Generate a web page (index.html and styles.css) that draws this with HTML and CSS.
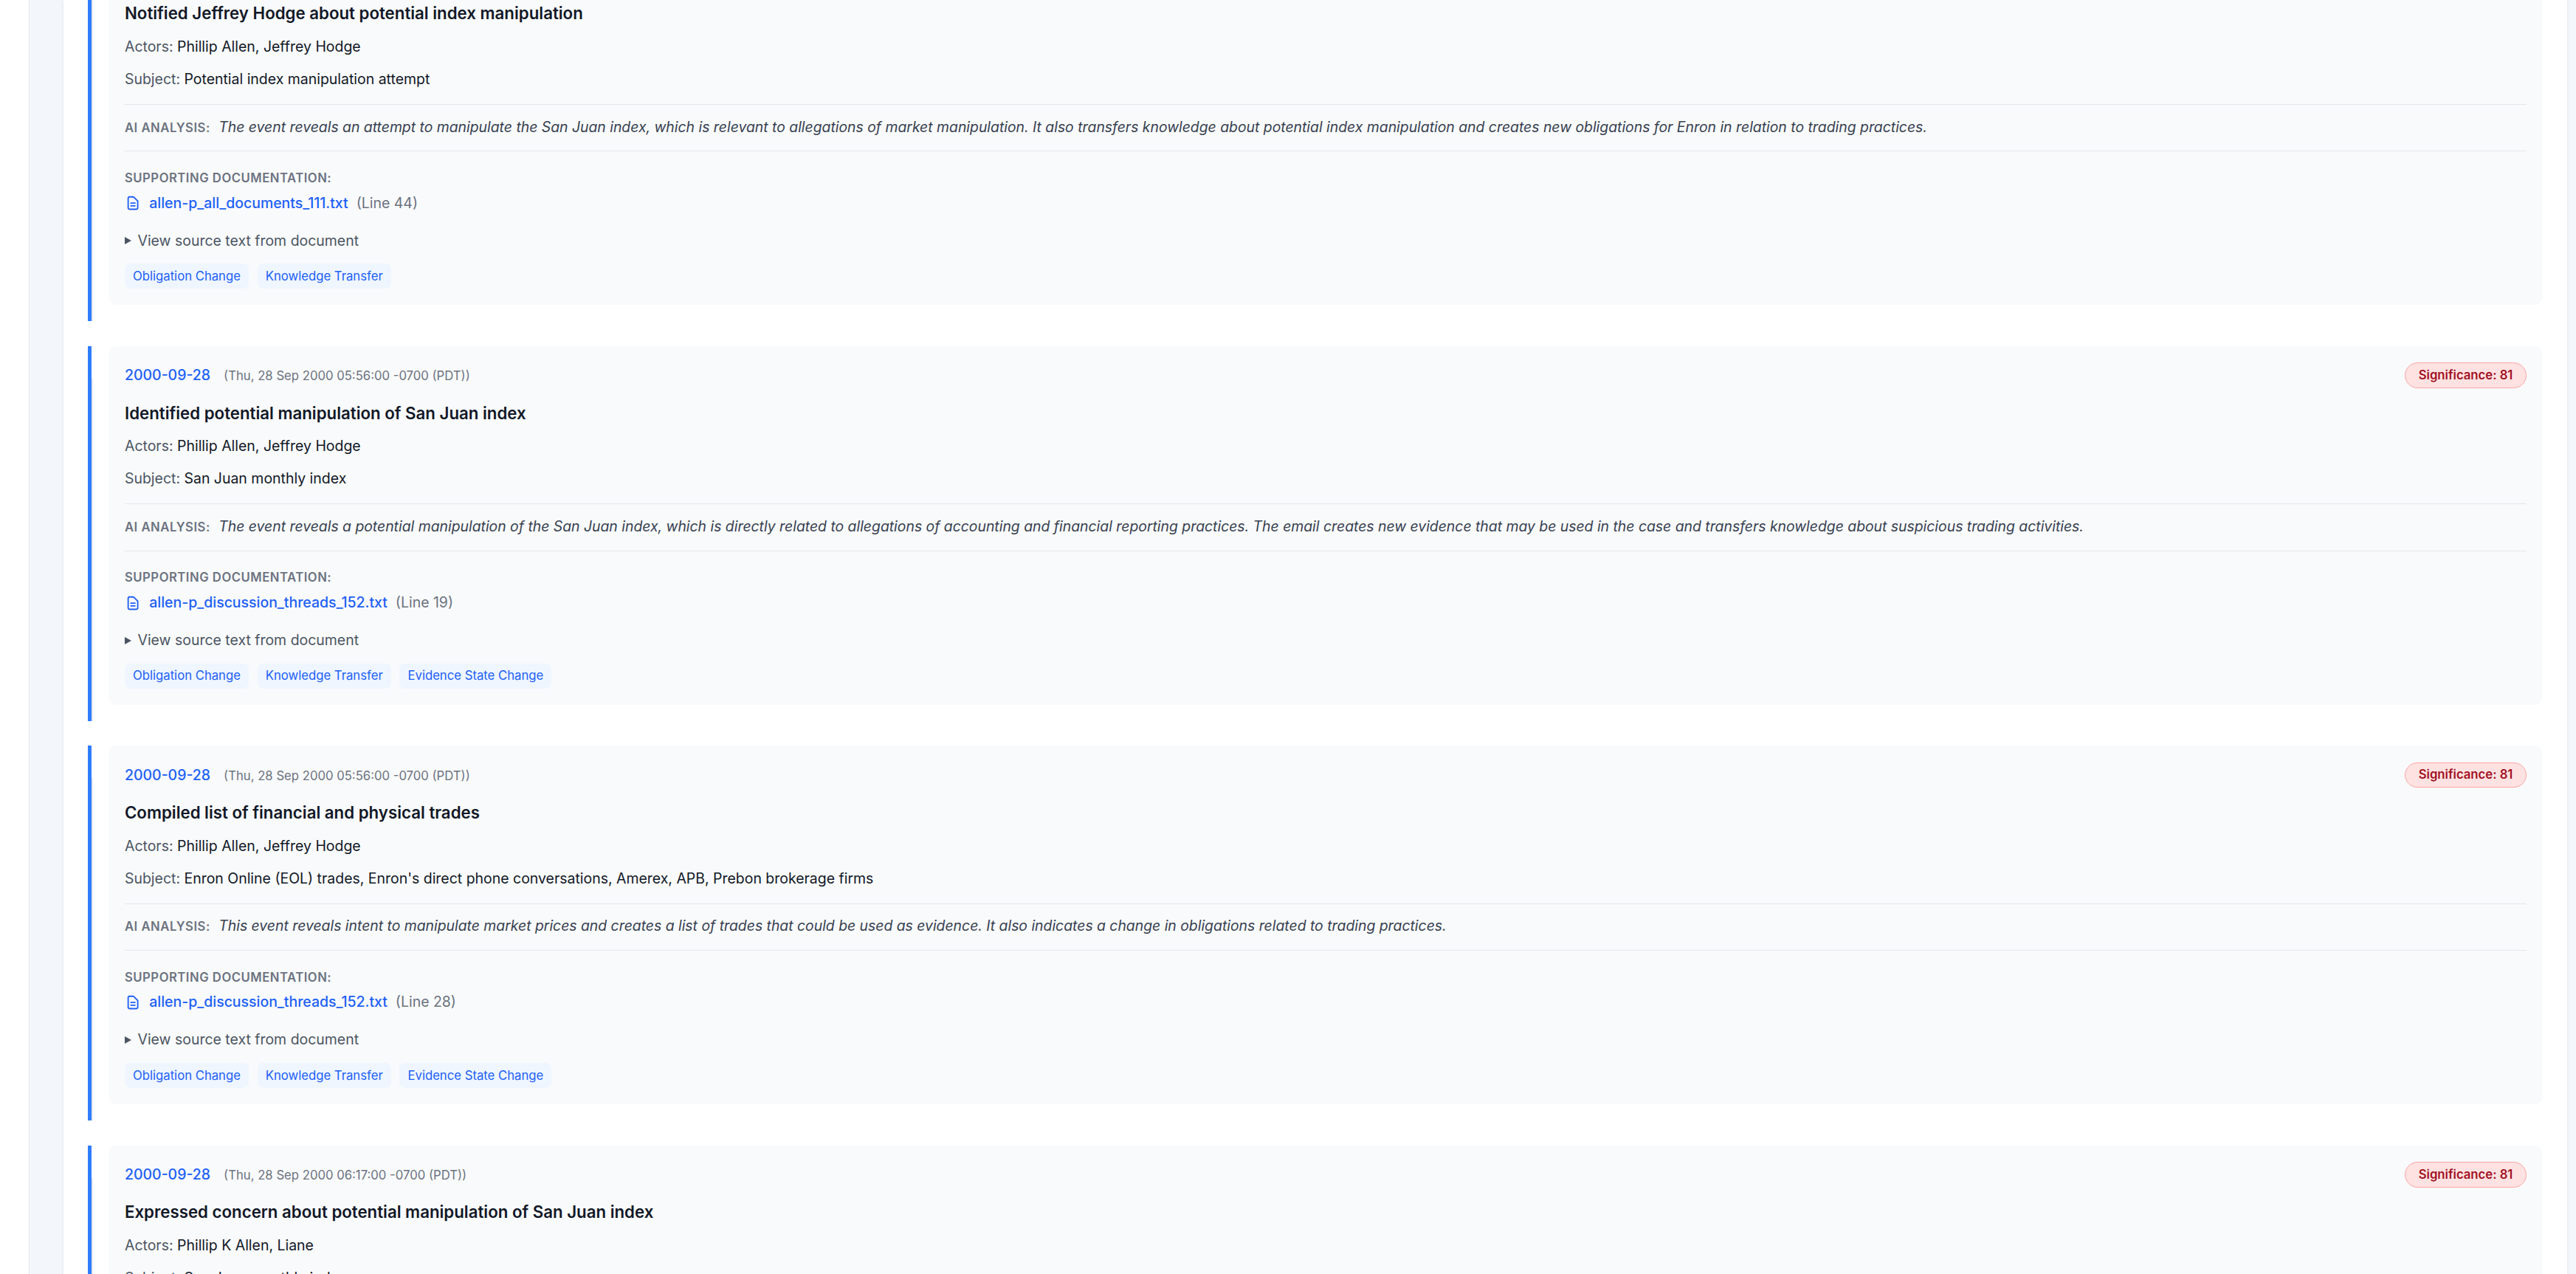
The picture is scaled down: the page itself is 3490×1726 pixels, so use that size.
FILE: index.html
```html
<!DOCTYPE html>
<html lang="en">
<head>
<meta charset="utf-8">
<title>Timeline</title>
<link rel="stylesheet" href="styles.css">
</head>
<body>
<div class="app">
  <aside class="rail"></aside>
  <main class="main">
    <section class="panel">
      <div class="timeline">

        <article class="item">
          <div class="card">
            <div class="head">
              <div class="when"><span class="date">2000-09-28</span><span class="stamp">(Thu, 28 Sep 2000 05:56:00 -0700 (PDT))</span></div>
              <span class="badge">Significance: 81</span>
            </div>
            <h3 class="title">Notified Jeffrey Hodge about potential index manipulation</h3>
            <p class="meta"><span class="label">Actors:</span> Phillip Allen, Jeffrey Hodge</p>
            <p class="meta"><span class="label">Subject:</span> Potential index manipulation attempt</p>
            <div class="analysis"><span class="analysis-label">AI ANALYSIS:</span><em>The event reveals an attempt to manipulate the San Juan index, which is relevant to allegations of market manipulation. It also transfers knowledge about potential index manipulation and creates new obligations for Enron in relation to trading practices.</em></div>
            <div class="docs-label">SUPPORTING DOCUMENTATION:</div>
            <div class="doc">
              <svg class="doc-icon" viewBox="0 0 24 24" fill="none" stroke="currentColor" stroke-width="2" stroke-linecap="round" stroke-linejoin="round"><path d="M9 12h6m-6 4h6m2 5H7a2 2 0 01-2-2V5a2 2 0 012-2h5.586a1 1 0 01.707.293l5.414 5.414a1 1 0 01.293.707V19a2 2 0 01-2 2z"/></svg>
              <a class="doc-link">allen-p_all_documents_111.txt</a><span class="doc-line">(Line 44)</span>
            </div>
            <div class="source"><span class="caret"></span>View source text from document</div>
            <div class="tags"><span class="tag">Obligation Change</span><span class="tag">Knowledge Transfer</span></div>
          </div>
        </article>

        <article class="item">
          <div class="card">
            <div class="head">
              <div class="when"><span class="date">2000-09-28</span><span class="stamp">(Thu, 28 Sep 2000 05:56:00 -0700 (PDT))</span></div>
              <span class="badge">Significance: 81</span>
            </div>
            <h3 class="title">Identified potential manipulation of San Juan index</h3>
            <p class="meta"><span class="label">Actors:</span> Phillip Allen, Jeffrey Hodge</p>
            <p class="meta"><span class="label">Subject:</span> San Juan monthly index</p>
            <div class="analysis"><span class="analysis-label">AI ANALYSIS:</span><em>The event reveals a potential manipulation of the San Juan index, which is directly related to allegations of accounting and financial reporting practices. The email creates new evidence that may be used in the case and transfers knowledge about suspicious trading activities.</em></div>
            <div class="docs-label">SUPPORTING DOCUMENTATION:</div>
            <div class="doc">
              <svg class="doc-icon" viewBox="0 0 24 24" fill="none" stroke="currentColor" stroke-width="2" stroke-linecap="round" stroke-linejoin="round"><path d="M9 12h6m-6 4h6m2 5H7a2 2 0 01-2-2V5a2 2 0 012-2h5.586a1 1 0 01.707.293l5.414 5.414a1 1 0 01.293.707V19a2 2 0 01-2 2z"/></svg>
              <a class="doc-link">allen-p_discussion_threads_152.txt</a><span class="doc-line">(Line 19)</span>
            </div>
            <div class="source"><span class="caret"></span>View source text from document</div>
            <div class="tags"><span class="tag">Obligation Change</span><span class="tag">Knowledge Transfer</span><span class="tag">Evidence State Change</span></div>
          </div>
        </article>

        <article class="item">
          <div class="card">
            <div class="head">
              <div class="when"><span class="date">2000-09-28</span><span class="stamp">(Thu, 28 Sep 2000 05:56:00 -0700 (PDT))</span></div>
              <span class="badge">Significance: 81</span>
            </div>
            <h3 class="title">Compiled list of financial and physical trades</h3>
            <p class="meta"><span class="label">Actors:</span> Phillip Allen, Jeffrey Hodge</p>
            <p class="meta"><span class="label">Subject:</span> Enron Online (EOL) trades, Enron's direct phone conversations, Amerex, APB, Prebon brokerage firms</p>
            <div class="analysis"><span class="analysis-label">AI ANALYSIS:</span><em>This event reveals intent to manipulate market prices and creates a list of trades that could be used as evidence. It also indicates a change in obligations related to trading practices.</em></div>
            <div class="docs-label">SUPPORTING DOCUMENTATION:</div>
            <div class="doc">
              <svg class="doc-icon" viewBox="0 0 24 24" fill="none" stroke="currentColor" stroke-width="2" stroke-linecap="round" stroke-linejoin="round"><path d="M9 12h6m-6 4h6m2 5H7a2 2 0 01-2-2V5a2 2 0 012-2h5.586a1 1 0 01.707.293l5.414 5.414a1 1 0 01.293.707V19a2 2 0 01-2 2z"/></svg>
              <a class="doc-link">allen-p_discussion_threads_152.txt</a><span class="doc-line">(Line 28)</span>
            </div>
            <div class="source"><span class="caret"></span>View source text from document</div>
            <div class="tags"><span class="tag">Obligation Change</span><span class="tag">Knowledge Transfer</span><span class="tag">Evidence State Change</span></div>
          </div>
        </article>

        <article class="item">
          <div class="card">
            <div class="head">
              <div class="when"><span class="date">2000-09-28</span><span class="stamp">(Thu, 28 Sep 2000 06:17:00 -0700 (PDT))</span></div>
              <span class="badge">Significance: 81</span>
            </div>
            <h3 class="title">Expressed concern about potential manipulation of San Juan index</h3>
            <p class="meta"><span class="label">Actors:</span> Phillip K Allen, Liane</p>
            <p class="meta"><span class="label">Subject:</span> San Juan monthly index</p>
          </div>
        </article>

      </div>
    </section>
  </main>
</div>
</body>
</html>
```
FILE: styles.css
```css
* { box-sizing: border-box; }
html, body { margin: 0; height: 100%; overflow: hidden; background: #fff; }
body { font-family: Inter, "Liberation Sans", sans-serif; color: #111827; }
.app { display: flex; height: 1726px; overflow: hidden; }
.rail { width: 40px; flex: none; background: #fff; border-right: 1px solid #e5e7eb; }
.main { flex: 1; min-width: 0; background: #f3f6fb; padding: 0 12px 0 45.6px; }
.panel { height: 100%; background: #fff; box-shadow: 0 1px 4px rgba(0,0,0,.09); padding: 0 33px 0 33.4px; overflow: hidden; }
.timeline { display: flex; flex-direction: column; gap: 33.4px; margin-top: -72.6px; }
.item { position: relative; border-left: 5px solid #2f7dfe; padding: 0 0 22.2px 22.8px; flex: none; }
.item::before { content: ""; position: absolute; left: 0; top: 44px; bottom: 0; width: 2px; background: #e5e7eb; }
.card { background: #f9fafb; border-radius: 11px; padding: 22.2px; }
.head { display: flex; justify-content: space-between; align-items: center; margin-bottom: 16.7px; }
.when { display: flex; align-items: baseline; gap: 18px; }
.date { font-size: 19.47px; font-weight: 500; color: #2060f5; }
.stamp { font-size: 16.7px; color: #6b7280; }
.badge { font-size: 16.7px; font-weight: 600; line-height: 23px; padding: 4.9px 17.4px; color: #a1101f; background: #fee2e2; border: 1px solid #fca5a5; border-radius: 999px; white-space: nowrap; }
.title { margin: 0 0 15.5px; font-size: 22.25px; line-height: 33.4px; font-weight: 600; color: #111827; }
.meta { margin: 0 0 16.2px; font-size: 19.47px; line-height: 27.8px; color: #111827; }
.meta:last-of-type { margin-bottom: 19px; }
.label { color: #4b5563; }
.analysis { padding: 16.8px 0; border-top: 1px solid #e5e7eb; border-bottom: 1px solid #e5e7eb; font-size: 19.38px; line-height: 27.8px; color: #374151; }
.analysis-label { font-size: 16.7px; font-weight: 600; letter-spacing: .5px; color: #6b7280; margin-right: 11.5px; }
.docs-label { margin-top: 24.5px; font-size: 16.7px; line-height: 23px; font-weight: 600; letter-spacing: .5px; color: #6b7280; }
.doc { display: flex; align-items: center; margin-top: 8.9px; font-size: 19.47px; line-height: 27.8px; }
.doc-icon { width: 22.25px; height: 22.25px; color: #2060f5; margin-right: 11px; flex: none; }
.doc-link { color: #2060f5; font-weight: 500; }
.doc-line { color: #6b7280; margin-left: 11px; }
.source { display: flex; align-items: center; margin-top: 23.2px; font-size: 19.47px; line-height: 27.8px; color: #4b5563; }
.caret { width: 0; height: 0; border-left: 9px solid #4b5563; border-top: 5px solid transparent; border-bottom: 5px solid transparent; margin-right: 8.5px; }
.tags { display: flex; gap: 11.8px; margin-top: 16.8px; }
.tag { font-size: 16.7px; line-height: 23px; padding: 5.5px 11px; color: #2060f5; background: #eff6ff; border-radius: 8px; }
```
